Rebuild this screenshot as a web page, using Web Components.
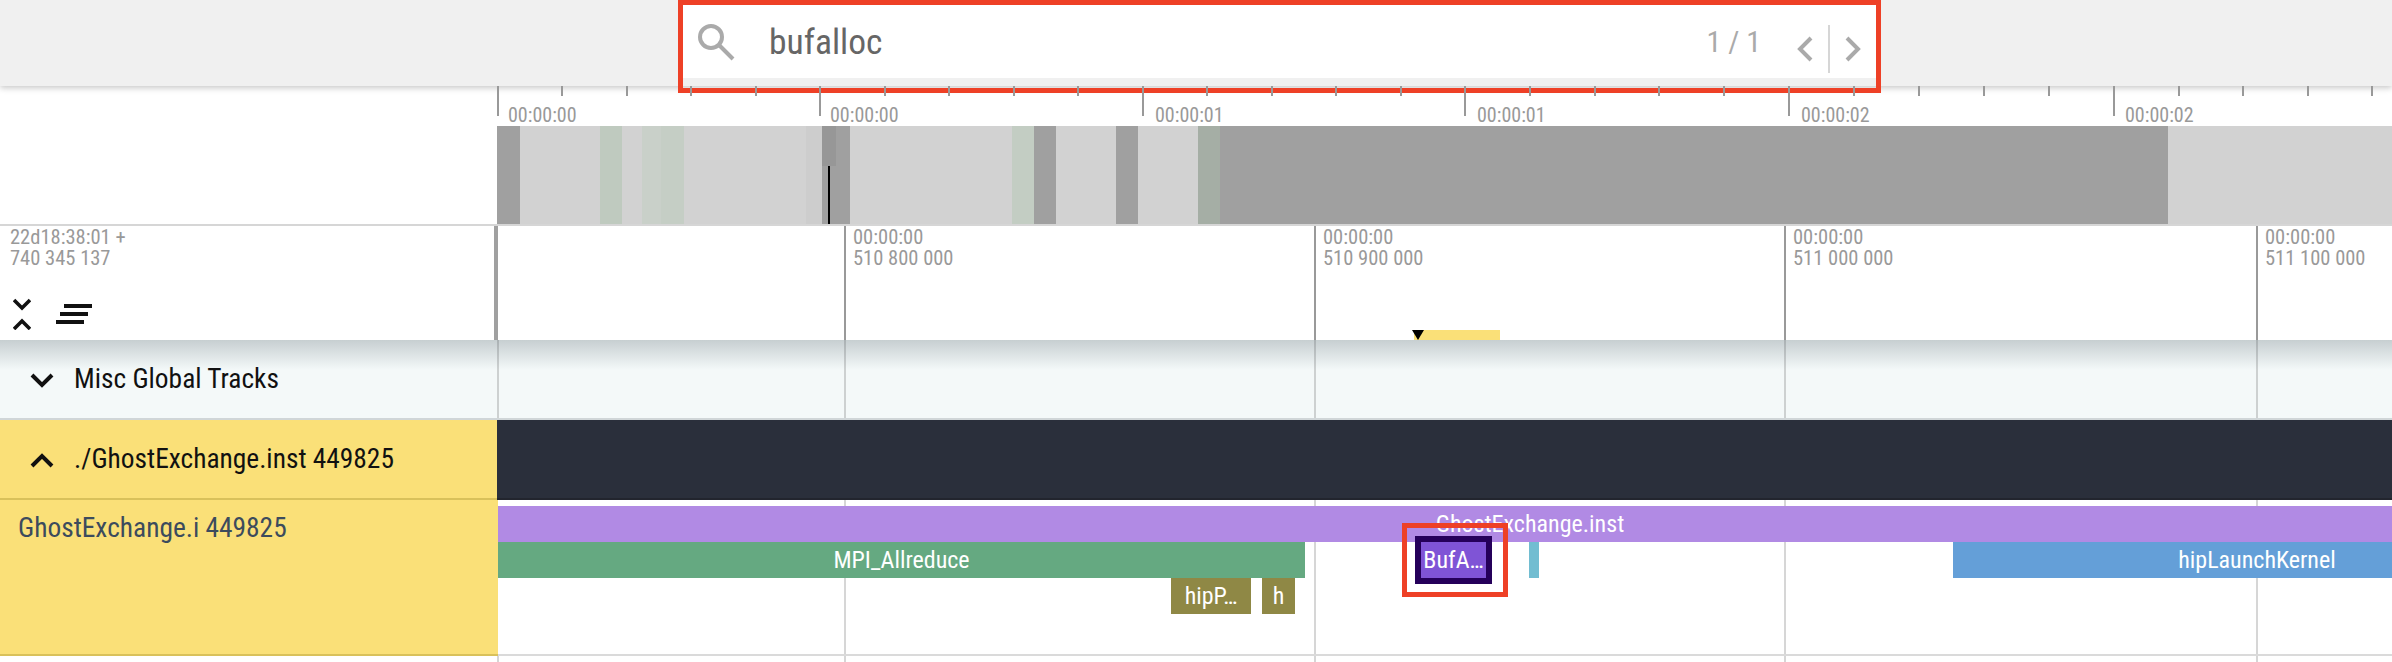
<!DOCTYPE html>
<html>
<head>
<meta charset="utf-8">
<style>
  html, body { margin: 0; padding: 0; background: #fff; overflow: hidden; }
  body { font-family: Roboto, "Liberation Sans", sans-serif; font-stretch: 75%; width: 2392px; height: 662px; }
</style>
</head>
<body>
<tl-app></tl-app>
<script>
const FONT = `Roboto, "Liberation Sans", sans-serif`;
const gridLine = x => `linear-gradient(rgba(0,0,0,.16),rgba(0,0,0,.16)) ${x}px 0 / 2px 100% no-repeat`;

class TlSearchbar extends HTMLElement {
  constructor() {
    super();
    this.attachShadow({ mode: "open" });
    this.shadowRoot.innerHTML = `
      <style>
      :host {
        display: block;
        height: 86px;
        background: #f0f0f0;
        position: relative;
        z-index: 2;
        box-shadow: 0 2px 6px rgba(0,0,0,.22);
      }
      .box {
        margin-left: 683px;
        position: relative;
        top: 5px;
        width: 1193px;
        height: 73px;
        background: #fff;
        display: flex;
        align-items: center;
      }
      .mag { margin: 3px 0 0 15px; width: 38px; height: 38px; }
      .q { margin-left: 33px; font-size: 35.5px; color: #666; flex: 1; }
      .count { font-size: 30px; color: #aaa; margin-right: 36px; }
      .nav { width: 16px; height: 26px; margin-top: 15px; }
      .sep { width: 2px; height: 48px; background: #d6d6d6; margin: 15px 15px 0 15px; }
      .end { margin-right: 15px; }
      </style>
      <div class="box">
        <svg class="mag" viewBox="0 0 38 38" fill="none" stroke="#aaa" stroke-width="4">
          <circle cx="13" cy="13" r="11"/><path d="M21 21 L35 35"/>
        </svg>
        <span class="q">bufalloc</span>
        <span class="count">1 / 1</span>
        <svg class="nav" viewBox="0 0 16 26" fill="none" stroke="#aaa" stroke-width="4"><path d="M14 2 L3 13 L14 24"/></svg>
        <span class="sep"></span>
        <svg class="nav end" viewBox="0 0 16 26" fill="none" stroke="#aaa" stroke-width="4"><path d="M2 2 L13 13 L2 24"/></svg>
      </div>`;
  }
}

class TlOverview extends HTMLElement {
  constructor() {
    super();
    this.attachShadow({ mode: "open" });
    const segs = [
      [23, "#a0a0a0"], [80, "#d2d2d2"], [22, "#bfcabf"], [20, "#d2d2d2"], [19, "#c9d0c9"],
      [23, "#c5cec5"], [122, "#d2d2d2"], [16, "#cdcdcd"], [28, "#a0a0a0"], [162, "#d2d2d2"],
      [22, "#c3cdc3"], [22, "#a0a0a0"], [60, "#d2d2d2"], [22, "#a0a0a0"], [60, "#d2d2d2"],
      [22, "#a5aea5"], [948, "#a0a0a0"], [224, "#d2d2d2"]
    ];
    const majors = [0, 322, 645, 967, 1291, 1616, 1939];
    let ticks = "";
    majors.slice(0, -1).forEach((m, i) => {
      const step = (majors[i + 1] - m) / 5;
      for (let k = 0; k < 5; k++) {
        ticks += `<i class="${k === 0 ? "mj" : ""}" style="left:${Math.round(m + k * step)}px"></i>`;
      }
    });
    const labels = [["00:00:00", 11], ["00:00:00", 333], ["00:00:01", 658], ["00:00:01", 980], ["00:00:02", 1304], ["00:00:02", 1628]];
    this.shadowRoot.innerHTML = `
      <style>
      :host {
        display: grid;
        grid-template-columns: 497px 1fr;
        height: 140px;
        box-sizing: border-box;
        border-bottom: 2px solid #d6d6d6;
        position: relative;
      }
      .area { position: relative; overflow: hidden; }
      i { position: absolute; top: 0; width: 2px; height: 10px; background: #999; }
      i.mj { height: 30px; }
      .ruler { position: absolute; left: 497px; top: 0; width: 1895px; height: 30px; overflow: hidden; z-index: 4; }
      .lab { position: absolute; top: 17px; font-size: 20px; line-height: 24px; color: #999; }
      .bars { position: absolute; left: 0; right: 0; top: 40px; height: 98px; display: flex; }
      .bars div { flex: none; }
      .win { position: absolute; left: 325px; top: 40px; width: 14px; height: 40px; background: #979797; }
      .cur { position: absolute; left: 331px; top: 80px; width: 2px; height: 58px; background: #000; }
      </style>
      <div></div>
      <div class="area">
        ${labels.map(l => `<span class="lab" style="left:${l[1]}px">${l[0]}</span>`).join("")}
        <div class="bars">${segs.map(s => `<div style="width:${s[0]}px;background:${s[1]}"></div>`).join("")}</div>
        <div class="win"></div><div class="cur"></div>
      </div>
      <div class="ruler">${ticks}</div>`;
  }
}

class TlHeader extends HTMLElement {
  constructor() {
    super();
    this.attachShadow({ mode: "open" });
    const cols = [["510 800 000", 347], ["510 900 000", 817], ["511 000 000", 1287], ["511 100 000", 1759]];
    this.shadowRoot.innerHTML = `
      <style>
      :host {
        display: grid;
        grid-template-columns: 497px 1fr;
        height: 114px;
        position: relative;
        background: #fff;
      }
      .lhs { position: relative; padding: 1px 0 0 10px; font-size: 20.5px; line-height: 21px; color: #999;
             border-right: 4px solid #a0a0a0; box-sizing: border-box; width: 498px; }
      .tools { display: flex; gap: 25px; position: absolute; left: 13px; top: 72px; align-items: center; }
      .rhs { position: relative; overflow: hidden; background: transparent; }
      .tk { position: absolute; top: 0; bottom: 0; width: 2px; background: #999; }
      .t { position: absolute; top: 1px; font-size: 20.5px; line-height: 21px; color: #999; white-space: pre; }
      .note { position: absolute; left: 917px; top: 104px; width: 86px; height: 10px; background: #fae078; }
      .flag { position: absolute; left: 915px; top: 104px; width: 0; height: 0;
              border-left: 6.5px solid transparent; border-right: 6.5px solid transparent; border-top: 10px solid #000; }
      </style>
      <div class="lhs">22d18:38:01 +<br>740 345 137
        <div class="tools">
          <svg width="18" height="32" viewBox="0 0 18 32" fill="none" stroke="#111" stroke-width="3.6">
            <path d="M1 2 L9 10 L17 2"/><path d="M1 31 L9 23 L17 31"/>
          </svg>
          <svg width="36" height="20" viewBox="0 0 36 20" fill="#111">
            <rect x="8" y="0" width="28" height="4"/><rect x="4" y="8" width="28" height="4"/><rect x="0" y="16" width="28" height="4"/>
          </svg>
        </div>
      </div>
      <div class="rhs">
        ${cols.map(c => `<div class="tk" style="left:${c[1]}px"></div><div class="t" style="left:${c[1] + 9}px">00:00:00\n${c[0]}</div>`).join("")}
        <div class="note"></div><div class="flag"></div>
      </div>`;
  }
}

class TlGroup extends HTMLElement {
  constructor() {
    super();
    this.attachShadow({ mode: "open" });
    const up = this.hasAttribute("open");
    const path = up ? "M2 13 L12 3 L22 13" : "M2 2 L12 12 L22 2";
    this.shadowRoot.innerHTML = `
      <style>
      :host {
        display: grid;
        grid-template-columns: 497px 1fr;
        position: relative;
        height: 80px;
      }
      .shell { display: flex; align-items: center; gap: 20px; padding-left: 30px;
               background: var(--bg); border-bottom: 2px solid var(--line); }
      svg { flex: none; margin-top: 2px; }
      .name { font-size: 27.4px; color: #111; white-space: nowrap; }
      .rhs { background: var(--rhs); border-bottom: 2px solid var(--rline); }
      </style>
      <div class="shell">
        <svg width="24" height="15" viewBox="0 0 24 15" fill="none" stroke="#111" stroke-width="4"><path d="${path}"/></svg>
        <span class="name"><slot></slot></span>
      </div>
      <div class="rhs"></div>`;
  }
}

class TlThread extends HTMLElement {
  constructor() {
    super();
    this.attachShadow({ mode: "open" });
    this.shadowRoot.innerHTML = `
      <style>
      :host {
        display: grid;
        grid-template-columns: 498px 1fr;
        height: 156px;
        position: relative;
        box-sizing: border-box;
        border-bottom: 2px solid #dadada;
      }
      .shell { background: #fae078; padding: 10px 0 0 18px; font-size: 27.4px; line-height: 36px;
               color: #3c4b5d; margin-bottom: -2px; border-bottom: 2px solid #d9c15a;
               box-sizing: border-box; height: 156px; }
      .canvas { position: relative; overflow: hidden; background: ${[346, 816, 1286, 1758].map(gridLine).join(",")}; }
      </style>
      <div class="shell">GhostExchange.i 449825</div>
      <div class="canvas"><slot></slot></div>`;
  }
}

class TlSlice extends HTMLElement {
  constructor() {
    super();
    this.attachShadow({ mode: "open" });
    const x = +this.getAttribute("x"), w = +this.getAttribute("w"), depth = +this.getAttribute("depth");
    this.shadowRoot.innerHTML = `
      <style>
      :host {
        position: absolute;
        left: ${x}px;
        top: ${6 + depth * 36}px;
        width: ${w}px;
        height: 36px;
        display: block;
      }
      .b { height: 100%; display: flex; align-items: center; justify-content: center;
           background: ${this.getAttribute("color")}; color: #fff; font-size: 24px;
           white-space: nowrap; overflow: hidden; }
      </style>
      <div class="b"><slot></slot></div>`;
  }
}

class TlApp extends HTMLElement {
  constructor() {
    super();
    this.attachShadow({ mode: "open" });
    const lines = [0, 347, 817, 1287, 1759].map(gridLine).join(",");
    this.shadowRoot.innerHTML = `
      <style>
      :host { display: flex; flex-direction: column; position: relative; width: 2392px; height: 662px; overflow: hidden;
              font-family: ${FONT}; font-stretch: 75%; }
      .tracks { position: relative; flex: 1; display: flex; flex-direction: column; }
      .tracks::before { content: ""; position: absolute; left: 0; right: 0; top: 0; height: 30px; z-index: 2;
                        background: linear-gradient(rgba(70,85,95,.26), rgba(70,85,95,0)); }
      tl-group.misc { --bg: #f4f9f9; --rhs: ${lines}, #f4f9f9; --line: #d0d6d8; --rline: #d0d6d8; }
      tl-group.proc { --bg: #fae078; --rhs: #2a2f3b; --line: #d9c15a; --rline: #22252e; }
      .tail { flex: 1; margin-left: 497px; background: ${lines}; }
      .sel { position: absolute; left: 1415px; top: 536px; width: 65px; height: 36px; background: #7f54d6;
             border: 6px solid #25005a; color: #fff; font-size: 24px; line-height: 36px; text-align: center;
             white-space: nowrap; overflow: hidden; }
      .mark { position: absolute; box-sizing: border-box; border: 5px solid #ee4026; }
      .mark.search { left: 678px; top: 0; width: 1203px; height: 93px; }
      .mark.slice { left: 1402px; top: 523px; width: 106px; height: 74px; }
      .over { position: absolute; inset: 0; z-index: 3; pointer-events: none; }
      </style>
      <tl-searchbar></tl-searchbar>
      <tl-overview></tl-overview>
      <tl-header></tl-header>
      <div class="tracks">
        <tl-group class="misc">Misc Global Tracks</tl-group>
        <tl-group class="proc" open>./GhostExchange.inst 449825</tl-group>
        <tl-thread>
          <tl-slice x="0" w="2064" depth="0" color="#b18ae4">GhostExchange.inst</tl-slice>
          <tl-slice x="0" w="807" depth="1" color="#65a981">MPI_Allreduce</tl-slice>
          <tl-slice x="1031" w="10" depth="1" color="#72bdd1"></tl-slice>
          <tl-slice x="1455" w="608" depth="1" color="#649fd8">hipLaunchKernel</tl-slice>
          <tl-slice x="673" w="80" depth="2" color="#8f8845">hipP…</tl-slice>
          <tl-slice x="764" w="33" depth="2" color="#8f8845">h</tl-slice>
        </tl-thread>
        <div class="tail"></div>
      </div>
      <div class="over">
        <div class="sel">BufA…</div>
        <div class="mark search"></div>
        <div class="mark slice"></div>
      </div>`;
  }
}

customElements.define("tl-searchbar", TlSearchbar);
customElements.define("tl-overview", TlOverview);
customElements.define("tl-header", TlHeader);
customElements.define("tl-group", TlGroup);
customElements.define("tl-thread", TlThread);
customElements.define("tl-slice", TlSlice);
customElements.define("tl-app", TlApp);
</script>
</body>
</html>
